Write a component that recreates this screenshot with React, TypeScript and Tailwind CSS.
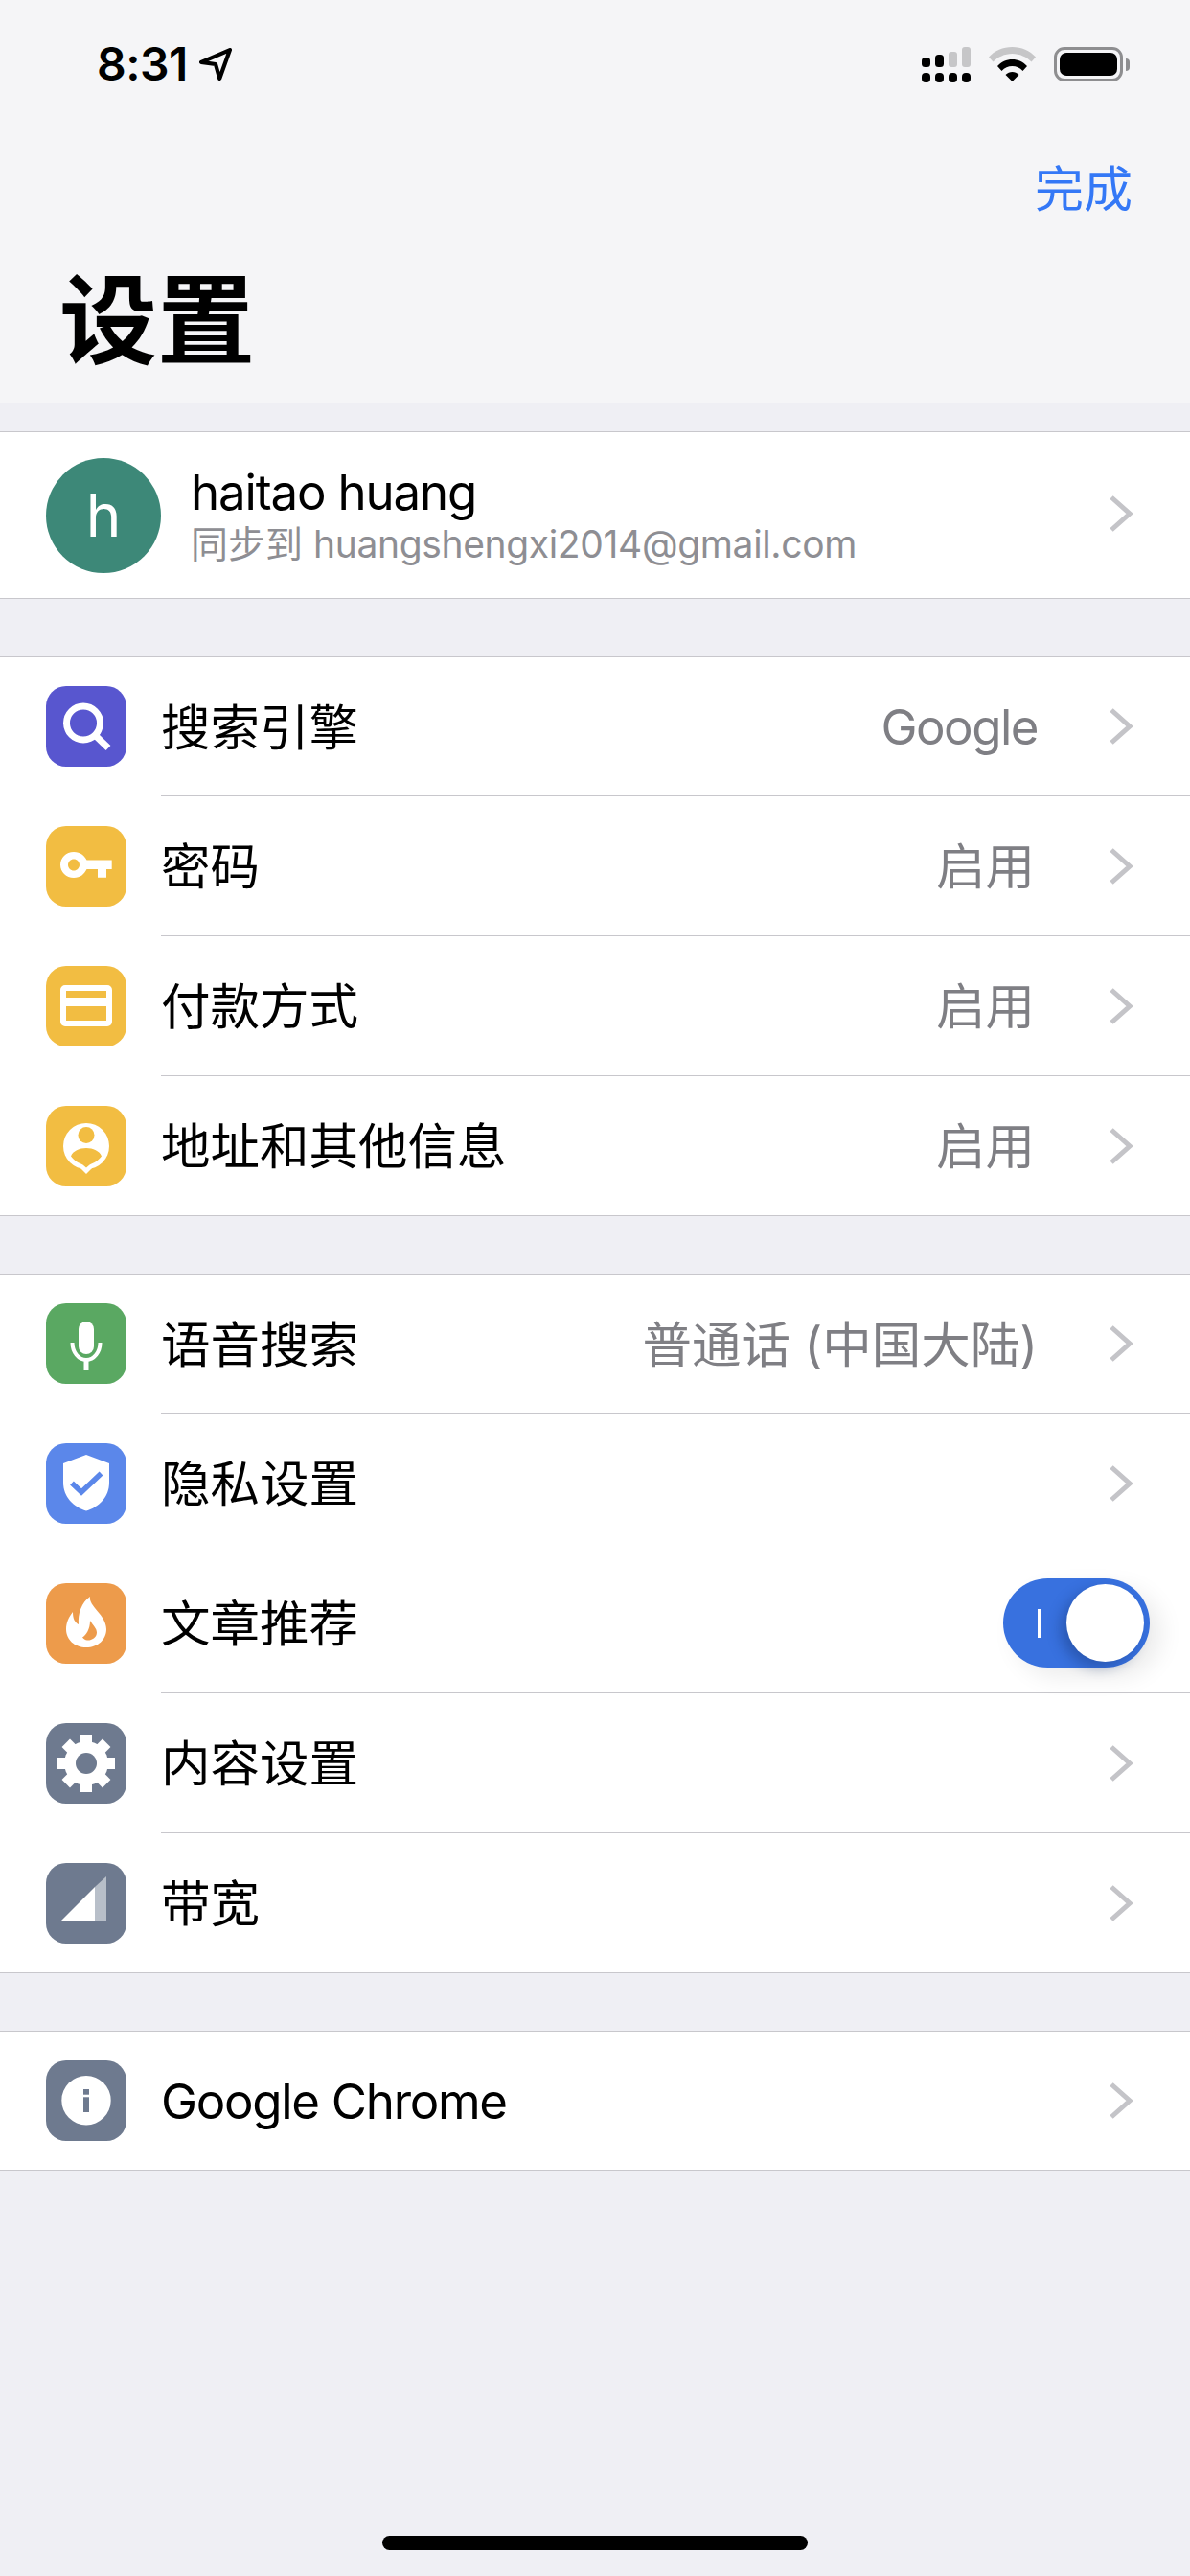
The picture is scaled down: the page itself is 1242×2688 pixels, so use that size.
import React from 'react';

type Row = {
  label: string;
  value?: string;
  color: string;
  icon: React.ReactNode;
  toggle?: boolean;
  latin?: boolean;
  tightValue?: boolean;
};

const SearchIcon = () => (
  <svg viewBox="0 0 84 84" className="h-full w-full" fill="none" stroke="white" strokeWidth="7">
    <circle cx="39" cy="38.5" r="17.5" />
    <path d="M51.5 51.5L65 64.5" />
  </svg>
);

const KeyIcon = () => (
  <svg viewBox="0 0 84 84" className="h-full w-full">
    <path
      fillRule="evenodd"
      fill="white"
      d="M29 27C36 27 40 31 42.500 35.500H68.700V45H63V53.700H54V45H42.500C40 50 36 54 29 54C21 54 15 48 15 40.500C15 33 21 27 29 27ZM29 34.500C25.700 34.500 23 37.200 23 40.500C23 43.800 25.700 46.500 29 46.500C32.300 46.500 35 43.800 35 40.500C35 37.200 32.300 34.500 29 34.500Z"
    />
  </svg>
);

const CardIcon = () => (
  <svg viewBox="0 0 84 84" className="h-full w-full" fill="none">
    <rect x="18" y="23" width="48" height="37" rx="2" stroke="white" strokeWidth="6" />
    <rect x="18" y="33" width="48" height="9" fill="white" />
  </svg>
);

const PersonPinIcon = ({ bg }: { bg: string }) => (
  <svg viewBox="0 0 84 84" className="h-full w-full">
    <circle cx="42" cy="42" r="24" fill="white" />
    <path d="M32 61L42 71L52 61Z" fill="white" />
    <circle cx="42" cy="30.500" r="8.500" fill={bg} />
    <path d="M26 52.500C28 47 35 44 42 44C49 44 56 47 58 52.500C55 57 49 60 45.500 61.500L42 64.500L38.500 61.500C35 60 29 57 26 52.500Z" fill={bg} />
  </svg>
);

const MicIcon = () => (
  <svg viewBox="0 0 84 84" className="h-full w-full" fill="none" stroke="white">
    <rect x="34" y="19" width="16" height="34" rx="8" fill="white" stroke="none" />
    <path d="M27.500 41C27.500 51 34 59 42 59C50 59 56.500 51 56.500 41" strokeWidth="4" />
    <path d="M42 58V70" strokeWidth="5" />
  </svg>
);

const ShieldIcon = ({ bg }: { bg: string }) => (
  <svg viewBox="0 0 84 84" className="h-full w-full">
    <path d="M42 12L66 21V41C66 56 55 66.500 42 70.600C29 66.500 18 56 18 41V21Z" fill="white" />
    <path d="M27 41.500L37 51L57.500 31.500" fill="none" stroke={bg} strokeWidth="5.500" />
  </svg>
);

const FlameIcon = ({ bg }: { bg: string }) => (
  <svg viewBox="0 0 84 84" className="h-full w-full">
    <path d="M46 14C44 24 63 33 63 48C63 59 54 67 42 67C30 67 21 59 21 48C21 41 24 35 28 30C28 37 30 41 34 43C33 32 37 20 46 14Z" fill="white" />
    <path d="M38 56.500C42 54 46 48 46 39C49 44 53 47 53 51.500C53 57 47 60 43 59.500C41 59.300 39 58 38 56.500Z" fill={bg} />
  </svg>
);

const GearIcon = ({ bg }: { bg: string }) => (
  <svg viewBox="0 0 84 84" className="h-full w-full">
    <circle cx="42" cy="42" r="23" fill="white" />
    {[0, 45, 90, 135, 180, 225, 270, 315].map(deg => (
      <rect key={deg} x="36" y="12" width="12" height="14" fill="white" transform={`rotate(${deg} 42 42)`} />
    ))}
    <circle cx="42" cy="42" r="11" fill={bg} />
  </svg>
);

const BandwidthIcon = () => (
  <svg viewBox="0 0 84 84" className="h-full w-full">
    <path d="M15 61L51 25V61Z" fill="white" />
    <path d="M51 25L63 14V61H51Z" fill="#b8bfc9" />
  </svg>
);

const InfoIcon = ({ bg }: { bg: string }) => (
  <svg viewBox="0 0 84 84" className="h-full w-full">
    <circle cx="42" cy="41.700" r="25.700" fill="white" />
    <rect x="39" y="30" width="6" height="5.700" fill={bg} />
    <rect x="39" y="38.300" width="6" height="15.700" fill={bg} />
  </svg>
);

const Chevron = () => (
  <svg viewBox="0 0 24 38" className="h-[38px] w-[24px] shrink-0" fill="none" stroke="#c4c4c8" strokeWidth="5">
    <path d="M2 2L21 19L2 36" />
  </svg>
);

const Toggle = () => (
  <div className="relative mr-[42px] flex h-[93px] w-[153px] items-center rounded-full bg-[#3871df] pl-[36px] shadow-[12px_10px_24px_rgba(0,0,0,0.08)]">
    <div className="h-[30px] w-[3px] bg-white" />
    <div className="absolute right-[6px] top-[6px] h-[81px] w-[81px] rounded-full bg-white shadow-[-6px_6px_14px_rgba(20,50,110,0.4)]" />
  </div>
);

const groups: Row[][] = [
  [
    { label: '搜索引擎', value: 'Google', color: '#5856cf', icon: <SearchIcon />, tightValue: true },
    { label: '密码', value: '启用', color: '#f2bd42', icon: <KeyIcon /> },
    { label: '付款方式', value: '启用', color: '#f2bd42', icon: <CardIcon /> },
    { label: '地址和其他信息', value: '启用', color: '#f2bd42', icon: <PersonPinIcon bg="#f2bd42" /> },
  ],
  [
    { label: '语音搜索', value: '普通话 (中国大陆)', color: '#5aa862', icon: <MicIcon />, tightValue: true },
    { label: '隐私设置', color: '#5b87ea', icon: <ShieldIcon bg="#5b87ea" /> },
    { label: '文章推荐', color: '#ed9b4b', icon: <FlameIcon bg="#ed9b4b" />, toggle: true },
    { label: '内容设置', color: '#6e7a8f', icon: <GearIcon bg="#6e7a8f" /> },
    { label: '带宽', color: '#6e7a8f', icon: <BandwidthIcon /> },
  ],
  [{ label: 'Google Chrome', color: '#6e7a8f', icon: <InfoIcon bg="#6e7a8f" />, latin: true }],
];

const StatusIcons = () => (
  <div className="flex items-center">
    {/* dual sim signal */}
    <svg viewBox="0 0 51 37" className="h-[37px] w-[51px]">
      <rect x="0" y="11" width="9" height="10" rx="3.500" fill="black" />
      <rect x="14" y="8" width="9" height="13" rx="3.500" fill="black" />
      <rect x="28" y="5" width="9" height="16" rx="3" fill="#c6c6c8" />
      <rect x="42" y="0" width="9" height="21" rx="3" fill="#c6c6c8" />
      <rect x="0" y="27" width="9" height="10" rx="4" fill="black" />
      <rect x="14" y="27" width="9" height="10" rx="4" fill="black" />
      <rect x="28" y="27" width="9" height="10" rx="4" fill="black" />
      <rect x="42" y="27" width="9" height="10" rx="4" fill="black" />
    </svg>
    <svg viewBox="0 0 49 36" className="ml-[19px] h-[36px] w-[49px]">
      <path d="M0 10.500C6 4 15 0 24.500 0C34 0 43 4 49 10.500L44.500 15.500C39.500 10.500 32.500 7 24.500 7C16.500 7 9.500 10.500 4.500 15.500Z" fill="#c6c6c8" />
      <path d="M9 20C13 15.500 18.500 13 24.500 13C30.500 13 36 15.500 40 20L35.500 25C32.500 21.500 28.700 20 24.500 20C20.300 20 16.500 21.500 13.500 25Z" fill="black" />
      <path d="M17.500 29C19.500 27 22 26 24.500 26C27 26 29.500 27 31.500 29L24.500 36Z" fill="black" />
    </svg>
    <div className="ml-[19px] flex items-center">
      <div className="h-[36px] w-[72px] rounded-[11px] border-[3px] border-[#8e8e90] p-[3px]">
        <div className="h-full w-full rounded-[7px] bg-black" />
      </div>
      <div className="ml-[3px] h-[13px] w-[4px] rounded-r-full bg-[#8e8e90]" />
    </div>
  </div>
);

export default function App() {
  return (
    <div className="flex h-[2688px] w-[1242px] flex-col overflow-hidden bg-[#efeff4] font-['Inter','Noto_Sans_CJK_SC',sans-serif] text-black">
      {/* Header */}
      <header className="h-[421px] border-b border-[#b2b2b4] bg-[#f5f5f7]">
        <div className="flex h-[134px] items-center justify-between pl-[101px] pr-[63px]">
          <div className="flex items-center">
            <span className="text-[48px] font-semibold leading-none tracking-[-0.5px]">8:31</span>
            <svg viewBox="0 0 32 32" className="ml-[12px] h-[34px] w-[34px]" fill="none" stroke="black" strokeWidth="4" strokeLinejoin="round">
              <path d="M30 2L2 14L16 16L20 30Z" />
            </svg>
          </div>
          <StatusIcons />
        </div>
        <div className="flex h-[126px] items-center justify-end pr-[60px]">
          <span className="text-[51px] leading-none text-[#3478f6]">完成</span>
        </div>
        <h1 className="pl-[62px] pt-[23px] text-[102px] font-bold leading-[104px]">设置</h1>
      </header>

      {/* Account */}
      <div className="mt-[29px] flex h-[175px] items-center border-y border-[#c8c7cc] bg-white pl-[48px] pr-[60px]">
        <div className="flex h-[120px] w-[120px] items-center justify-center rounded-full bg-[#3d8878] text-[62px] leading-none text-white">
          h
        </div>
        <div className="mb-[2px] ml-[31px] flex-1">
          <div className="text-[51px] leading-[60px] tracking-[-1.15px]">haitao huang</div>
          <div className="mt-[2px] text-[39px] leading-[44px] text-[#8e8e93]">
            同步到 <span className="tracking-[-0.35px]">huangshengxi2014@gmail.com</span>
          </div>
        </div>
        <div className="mb-[3px] flex">
          <Chevron />
        </div>
      </div>

      {/* Settings groups: every group is 146px per row, lines included */}
      {groups.map((rows, i) => (
        <div key={i} className="mt-[60px] border-t border-[#c8c7cc] bg-white">
          {rows.map((row, j) => {
            const isLast = j === rows.length - 1;
            return (
              <div
                key={row.label}
                className={`flex items-center pl-[48px] ${j === 0 ? 'h-[145px]' : 'h-[146px]'} ${isLast ? 'border-b border-[#c8c7cc]' : ''}`}
              >
                <div
                  className={`h-[84px] w-[84px] shrink-0 rounded-[21px] ${isLast ? '' : 'mb-[1px]'}`}
                  style={{ backgroundColor: row.color }}
                >
                  {row.icon}
                </div>
                <div className={`ml-[36px] flex flex-1 items-center self-stretch ${isLast ? '' : 'border-b border-[#c8c7cc]'}`}>
                  <span className={`flex-1 leading-none ${row.latin ? 'text-[51px] tracking-[-1.3px]' : 'pt-[3px] text-[51.5px]'}`}>
                    {row.label}
                  </span>
                  {row.toggle ? (
                    <Toggle />
                  ) : (
                    <div className="flex items-center pr-[60px]">
                      {row.value && (
                        <span
                          className={`leading-none text-[#7f7f84] ${row.tightValue ? 'mr-[75px]' : 'mr-[78px]'} ${row.value === 'Google' ? 'text-[51px] tracking-[-1.5px]' : 'pt-[3px] text-[51.5px]'}`}
                        >
                          {row.value}
                        </span>
                      )}
                      <Chevron />
                    </div>
                  )}
                </div>
              </div>
            );
          })}
        </div>
      ))}

      {/* Home indicator */}
      <div className="mb-[27px] mt-auto flex justify-center">
        <div className="h-[15px] w-[444px] rounded-full bg-black" />
      </div>
    </div>
  );
}
